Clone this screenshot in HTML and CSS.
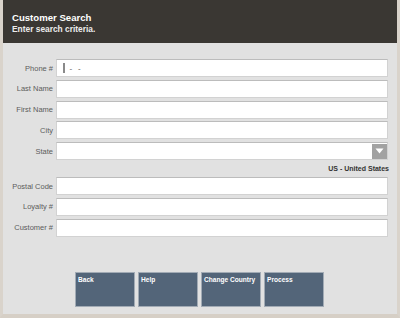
FILE: index.html
```html
<!DOCTYPE html>
<html>
<head>
<meta charset="utf-8">
<link rel="stylesheet" href="styles.css">
</head>
<body>
<div class="screen">
  <div class="header">
    <div class="title">Customer Search</div>
    <div class="subtitle">Enter search criteria.</div>
  </div>
  <div class="form">
    <div class="row"><div class="label">Phone #</div><div class="field"><span class="caret"></span><span class="mask">-&nbsp;&nbsp;-</span></div></div>
    <div class="row"><div class="label">Last Name</div><div class="field"></div></div>
    <div class="row"><div class="label">First Name</div><div class="field"></div></div>
    <div class="row"><div class="label">City</div><div class="field"></div></div>
    <div class="row"><div class="label">State</div><div class="field select"><span class="arrow"><svg width="9" height="6" viewBox="0 0 9 6"><path d="M0.5 0.5 H8.5 L4.5 5.5 Z" fill="#ffffff"/></svg></span></div></div>
    <div class="country">US - United States</div>
    <div class="row"><div class="label">Postal Code</div><div class="field"></div></div>
    <div class="row"><div class="label">Loyalty #</div><div class="field"></div></div>
    <div class="row"><div class="label">Customer #</div><div class="field"></div></div>
  </div>
  <div class="buttons">
    <div class="btn">Back</div>
    <div class="btn">Help</div>
    <div class="btn">Change Country</div>
    <div class="btn">Process</div>
  </div>
</div>
</body>
</html>
```
FILE: styles.css
```css
html, body {
  margin: 0;
  padding: 0;
  background: #e1e1e1;
}
.screen {
  box-sizing: border-box;
  width: 400px;
  height: 318px;
  background: #e1e1e1;
  border-left: 3px solid #d9d3cb;
  border-right: 3px solid #d9d3cb;
  border-bottom: 4px solid #d6cfc6;
  font-family: "Liberation Sans", Arial, sans-serif;
  display: flex;
  flex-direction: column;
  overflow: hidden;
}
.header {
  box-sizing: border-box;
  height: 43px;
  margin-left: -3px;
  margin-right: -3px;
  background: #3a3733;
  padding: 12px 0 0 12px;
  color: #ffffff;
  font-weight: bold;
}
.title {
  font-size: 9.6px;
  line-height: 12px;
}
.subtitle {
  font-size: 8.4px;
  line-height: 10px;
  color: #ececec;
}
.form {
  display: flex;
  flex-direction: column;
  gap: 2.75px;
  padding-top: 16px;
}
.row {
  display: flex;
  align-items: center;
  height: 18px;
}
.label {
  box-sizing: border-box;
  width: 53px;
  margin-left: -3px;
  text-align: right;
  font-size: 7.5px;
  color: #5c5c5c;
  margin-right: 3px;
}
.field {
  box-sizing: border-box;
  width: 332px;
  height: 18px;
  background: #ffffff;
  border: 1px solid #d2d2d2;
  border-top-color: #bcbcbc;
  display: flex;
  align-items: center;
  padding-left: 6px;
}
.caret {
  display: inline-block;
  width: 1.5px;
  height: 10px;
  background: #8a8a8a;
}
.mask {
  font-size: 8px;
  color: #555555;
  margin-left: 5px;
  letter-spacing: 0.5px;
}
.select {
  justify-content: flex-end;
  padding-right: 0;
}
.arrow {
  width: 15px;
  height: 15px;
  background: #a2a2a2;
  display: flex;
  align-items: center;
  justify-content: center;
}
.country {
  height: 11.5px;
  line-height: 11.5px;
  text-align: right;
  width: 386px;
  font-size: 7px;
  font-weight: bold;
  color: #333333;
}
.buttons {
  display: flex;
  gap: 3px;
  padding-left: 72px;
  margin-top: 35px;
}
.btn {
  box-sizing: border-box;
  width: 60px;
  height: 35px;
  background: #536579;
  border: 1px solid #a2abb5;
  color: #ffffff;
  font-size: 6.6px;
  font-weight: bold;
  padding: 3px 0 0 2px;
  line-height: 8px;
}
```
